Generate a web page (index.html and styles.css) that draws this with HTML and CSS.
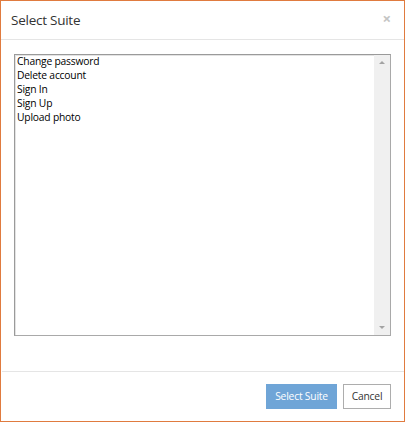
FILE: index.html
```html
<!DOCTYPE html>
<html lang="en">
<head>
<meta charset="utf-8">
<title>Select Suite</title>
<link rel="stylesheet" href="styles.css">
</head>
<body>
<div class="dialog">
  <div class="dialog-header">
    <h1 class="dialog-title">Select Suite</h1>
    <span class="dialog-close">&times;</span>
  </div>
  <div class="dialog-body">
    <div class="listbox">
      <ul class="listbox-items">
        <li>Change password</li>
        <li>Delete account</li>
        <li>Sign In</li>
        <li>Sign Up</li>
        <li>Upload photo</li>
      </ul>
      <div class="scrollbar">
        <span class="arrow arrow-up"></span>
        <span class="arrow arrow-down"></span>
      </div>
    </div>
  </div>
  <div class="dialog-footer">
    <button class="btn btn-primary">Select Suite</button>
    <button class="btn btn-default">Cancel</button>
  </div>
</div>
</body>
</html>
```
FILE: styles.css
```css
html, body {
  margin: 0;
  padding: 0;
  background: #ffffff;
}

body {
  font-family: "Open Sans", "Liberation Sans", sans-serif;
  color: #333333;
}

.dialog {
  box-sizing: border-box;
  width: 405px;
  height: 422px;
  border: 1px solid #e07b3f;
  display: flex;
  flex-direction: column;
  background: #ffffff;
}

.dialog-header {
  height: 38px;
  border-bottom: 1px solid #e5e5e5;
  display: flex;
  align-items: center;
  justify-content: space-between;
  padding: 0 13px 0 10px;
}

.dialog-title {
  margin: 0;
  font-size: 13.5px;
  letter-spacing: -0.25px;
  font-weight: 400;
  color: #333333;
  line-height: 20px;
}

.dialog-close {
  font-size: 15px;
  font-weight: 700;
  color: #c4c4c4;
  line-height: 1;
  margin-top: -4px;
}

.dialog-body {
  flex: 1;
  padding: 14px 13px 35px 13px;
  display: flex;
}

.listbox {
  flex: 1;
  display: flex;
  border: 1px solid #a9a9a9;
  border-top-color: #9a9a9a;
  border-left-color: #9a9a9a;
  box-shadow: inset 1px 1px 0 #e3e3e3;
}

.listbox-items {
  flex: 1;
  list-style: none;
  margin: -1px 0 0;
  padding: 0 2px;
  font-size: 10.3px;
  letter-spacing: -0.2px;
  line-height: 14px;
  color: #000000;
}

.scrollbar {
  width: 16px;
  background: #f0f0f0;
  display: flex;
  flex-direction: column;
  justify-content: space-between;
  align-items: center;
  padding: 6px 0 6px;
}

.arrow {
  width: 0;
  height: 0;
  border-left: 3px solid transparent;
  border-right: 3px solid transparent;
}

.arrow-up {
  border-bottom: 3px solid #a3a3a3;
}

.arrow-down {
  border-top: 3px solid #a3a3a3;
}

.dialog-footer {
  border-top: 1px solid #e5e5e5;
  margin-left: 1px;
  padding: 12px 13px 12px 0;
  display: flex;
  justify-content: flex-end;
  gap: 6px;
}

.btn {
  font-family: "Open Sans", "Liberation Sans", sans-serif;
  font-size: 10.3px;
  letter-spacing: -0.2px;
  height: 25px;
  padding: 0;
  border: 1px solid #adadad;
  background: #ffffff;
  color: #333333;
  line-height: 23px;
  margin: 0;
  white-space: nowrap;
}

.btn-primary {
  background: #6fa5d7;
  border-color: #6fa5d7;
  color: #ffffff;
  width: 71px;
}

.btn-default {
  width: 48px;
}
```
